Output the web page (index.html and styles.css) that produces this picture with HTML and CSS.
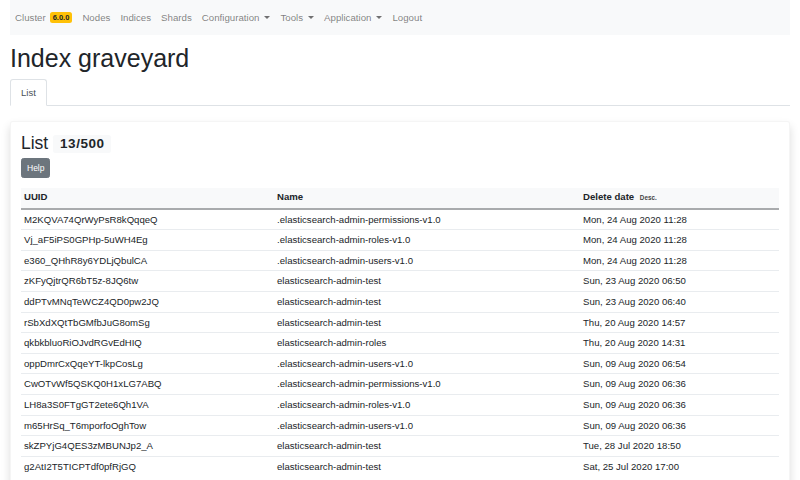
FILE: index.html
```html
<!DOCTYPE html>
<html lang="en">
<head>
<meta charset="utf-8">
<title>Index graveyard</title>
<link rel="stylesheet" href="styles.css">
</head>
<body>
<div class="container">
  <nav class="navbar">
    <a class="nav-link">Cluster <span class="badge badge-warning">6.0.0</span></a>
    <a class="nav-link">Nodes</a>
    <a class="nav-link">Indices</a>
    <a class="nav-link">Shards</a>
    <a class="nav-link dropdown">Configuration</a>
    <a class="nav-link dropdown">Tools</a>
    <a class="nav-link dropdown">Application</a>
    <a class="nav-link">Logout</a>
  </nav>

  <h1 class="page-title">Index graveyard</h1>

  <ul class="nav-tabs">
    <li class="tab active">List</li>
  </ul>

  <div class="card">
    <h3 class="card-title">List <span class="badge badge-light">13/500</span></h3>
    <button class="btn btn-secondary">Help</button>
    <table class="table">
      <thead>
        <tr>
          <th class="col-uuid">UUID</th>
          <th class="col-name">Name</th>
          <th class="col-date">Delete date <span class="sort">Desc.</span></th>
        </tr>
      </thead>
      <tbody>
        <tr><td>M2KQVA74QrWyPsR8kQqqeQ</td><td>.elasticsearch-admin-permissions-v1.0</td><td>Mon, 24 Aug 2020 11:28</td></tr>
        <tr><td>Vj_aF5iPS0GPHp-5uWH4Eg</td><td>.elasticsearch-admin-roles-v1.0</td><td>Mon, 24 Aug 2020 11:28</td></tr>
        <tr><td>e360_QHhR8y6YDLjQbulCA</td><td>.elasticsearch-admin-users-v1.0</td><td>Mon, 24 Aug 2020 11:28</td></tr>
        <tr><td>zKFyQjtrQR6bT5z-8JQ6tw</td><td>elasticsearch-admin-test</td><td>Sun, 23 Aug 2020 06:50</td></tr>
        <tr><td>ddPTvMNqTeWCZ4QD0pw2JQ</td><td>elasticsearch-admin-test</td><td>Sun, 23 Aug 2020 06:40</td></tr>
        <tr><td>rSbXdXQtTbGMfbJuG8omSg</td><td>elasticsearch-admin-test</td><td>Thu, 20 Aug 2020 14:57</td></tr>
        <tr><td>qkbkbluoRiOJvdRGvEdHIQ</td><td>elasticsearch-admin-roles</td><td>Thu, 20 Aug 2020 14:31</td></tr>
        <tr><td>oppDmrCxQqeYT-lkpCosLg</td><td>.elasticsearch-admin-users-v1.0</td><td>Sun, 09 Aug 2020 06:54</td></tr>
        <tr><td>CwOTvWf5QSKQ0H1xLG7ABQ</td><td>.elasticsearch-admin-permissions-v1.0</td><td>Sun, 09 Aug 2020 06:36</td></tr>
        <tr><td>LH8a3S0FTgGT2ete6Qh1VA</td><td>.elasticsearch-admin-roles-v1.0</td><td>Sun, 09 Aug 2020 06:36</td></tr>
        <tr><td>m65HrSq_T6mporfoOghTow</td><td>.elasticsearch-admin-users-v1.0</td><td>Sun, 09 Aug 2020 06:36</td></tr>
        <tr><td>skZPYjG4QES3zMBUNJp2_A</td><td>elasticsearch-admin-test</td><td>Tue, 28 Jul 2020 18:50</td></tr>
        <tr><td>g2AtI2T5TICPTdf0pfRjGQ</td><td>elasticsearch-admin-test</td><td>Sat, 25 Jul 2020 17:00</td></tr>
      </tbody>
    </table>
  </div>
</div>
</body>
</html>
```

FILE: styles.css
```css
* { box-sizing: border-box; }

html, body {
  margin: 0;
  padding: 0;
  background: #fff;
}

body {
  font-family: "Liberation Sans", Arial, sans-serif;
  font-size: 10px;
  line-height: 1.5;
  color: #212529;
}

.container {
  padding: 0 10px;
}

/* Navbar */
.navbar {
  display: flex;
  align-items: center;
  height: 35px;
  background: #f8f9fa;
  padding: 0;
}

.nav-link {
  display: flex;
  align-items: center;
  padding: 0 5px;
  color: rgba(0, 0, 0, 0.5);
  font-size: 9.7px;
  line-height: 15px;
  white-space: nowrap;
}

.dropdown::after {
  content: "";
  display: inline-block;
  margin-left: 5px;
  border-top: 3.5px solid rgba(0, 0, 0, 0.55);
  border-left: 3.5px solid transparent;
  border-right: 3.5px solid transparent;
}

.badge {
  display: inline-block;
  font-weight: 700;
  line-height: 1;
  text-align: center;
  white-space: nowrap;
  border-radius: 2.5px;
}

.badge-warning {
  margin-left: 4px;
  background: #ffc107;
  color: #212529;
  font-size: 7.5px;
  padding: 2px 3px;
}

.badge-light {
  background: #f8f9fa;
  color: #212529;
  font-size: 13.5px;
  letter-spacing: 0.5px;
  padding: 2.5px 7px 2.5px 7px;
  margin-left: 0;
  vertical-align: 1px;
}

/* Title */
.page-title {
  margin: 8px 0 6px;
  font-size: 25px;
  font-weight: 500;
  line-height: 30px;
}

/* Tabs */
.nav-tabs {
  display: flex;
  list-style: none;
  margin: 0;
  padding: 0;
  border-bottom: 1px solid #dee2e6;
}

.tab {
  margin-bottom: -1px;
  padding: 5px 10px;
  font-size: 9.5px;
  line-height: 15px;
  color: #495057;
  border: 1px solid transparent;
  border-top-left-radius: 3px;
  border-top-right-radius: 3px;
}

.tab.active {
  background: #fff;
  border-color: #dee2e6 #dee2e6 #fff;
}

/* Card */
.card {
  margin-top: 15px;
  padding: 10px 10px 20px;
  background: #fff;
  border: 1px solid rgba(0, 0, 0, 0.04);
  border-radius: 3px;
  box-shadow: 0 5px 10px rgba(0, 0, 0, 0.14);
}

.card-title {
  margin: 1px 0 4px;
  font-size: 17.5px;
  font-weight: 500;
  line-height: 21px;
}

.btn {
  display: inline-block;
  font-family: inherit;
  border: 1px solid transparent;
  border-radius: 2.5px;
  cursor: pointer;
}

.btn-secondary {
  background: #6c757d;
  border-color: #6c757d;
  color: #fff;
  font-size: 8.5px;
  line-height: 13px;
  padding: 2.5px 5px;
}

/* Table */
.table {
  width: 100%;
  margin-top: 10px;
  border-collapse: collapse;
}

.table th,
.table td {
  padding: 3px;
  text-align: left;
  vertical-align: top;
  font-size: 9.6px;
  line-height: 13.6px;
  border-top: 1px solid #e9ecef;
}

.table thead th {
  background: #f8f9fa;
  font-weight: 700;
  line-height: 12.6px;
  border-top: none;
  border-bottom: 2px solid #a9abad;
}

.table tbody tr:first-child td {
  border-top: none;
}

.col-uuid { width: 253px; }
.col-name { width: 306px; }

.sort {
  font-size: 6.3px;
  font-weight: 700;
  color: #444;
  margin-left: 3px;
}
```
